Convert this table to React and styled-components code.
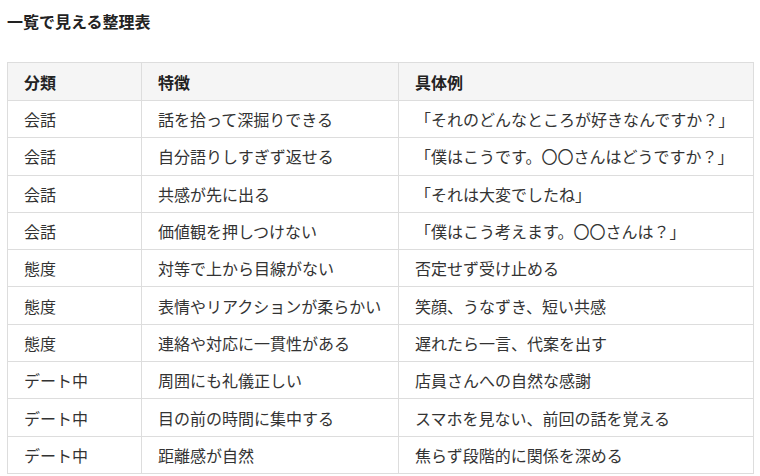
import React from "react";
import styled, { createGlobalStyle } from "styled-components";

const GlobalStyle = createGlobalStyle`
  body {
    margin: 0;
    background: #ffffff;
    font-family: "Noto Sans CJK JP", "Noto Sans", sans-serif;
    color: #333333;
  }
`;

const rows = [
  ["会話", "話を拾って深掘りできる", "「それのどんなところが好きなんですか？」"],
  ["会話", "自分語りしすぎず返せる", "「僕はこうです。〇〇さんはどうですか？」"],
  ["会話", "共感が先に出る", "「それは大変でしたね」"],
  ["会話", "価値観を押しつけない", "「僕はこう考えます。〇〇さんは？」"],
  ["態度", "対等で上から目線がない", "否定せず受け止める"],
  ["態度", "表情やリアクションが柔らかい", "笑顔、うなずき、短い共感"],
  ["態度", "連絡や対応に一貫性がある", "遅れたら一言、代案を出す"],
  ["デート中", "周囲にも礼儀正しい", "店員さんへの自然な感謝"],
  ["デート中", "目の前の時間に集中する", "スマホを見ない、前回の話を覚える"],
  ["デート中", "距離感が自然", "焦らず段階的に関係を深める"],
];

const App = () => {
  return (
    <Page>
      <GlobalStyle />
      <Title>一覧で見える整理表</Title>
      <Table>
        <colgroup>
          <Col width="134px" />
          <Col width="257px" />
          <Col width="355px" />
        </colgroup>
        <thead>
          <tr>
            <HeadCell>分類</HeadCell>
            <HeadCell>特徴</HeadCell>
            <HeadCell>具体例</HeadCell>
          </tr>
        </thead>
        <tbody>
          {rows.map((r, i) => (
            <tr key={i}>
              <Cell>{r[0]}</Cell>
              <Cell>{r[1]}</Cell>
              <Cell>{r[2]}</Cell>
            </tr>
          ))}
        </tbody>
      </Table>
    </Page>
  );
};

export default App;

const Page = styled.div`
  padding: 9px 7px;
`;

const Title = styled.h3`
  margin: 0 0 29px;
  font-size: 16px;
  line-height: 24px;
  font-weight: 700;
  color: #222222;
`;

const Table = styled.table`
  width: 746px;
  table-layout: fixed;
  border-collapse: collapse;
  font-size: 16px;
`;

const Col = styled.col`
  width: ${(p) => p.width};
`;

const HeadCell = styled.th`
  height: 38px;
  padding: 0 16px;
  text-align: left;
  font-weight: 700;
  color: #222222;
  background: #f5f5f5;
  border: 1px solid #dddddd;
  box-sizing: border-box;
`;

const Cell = styled.td`
  height: 37.3px;
  padding: 0 16px;
  text-align: left;
  border: 1px solid #dddddd;
  box-sizing: border-box;
  white-space: nowrap;
`;
